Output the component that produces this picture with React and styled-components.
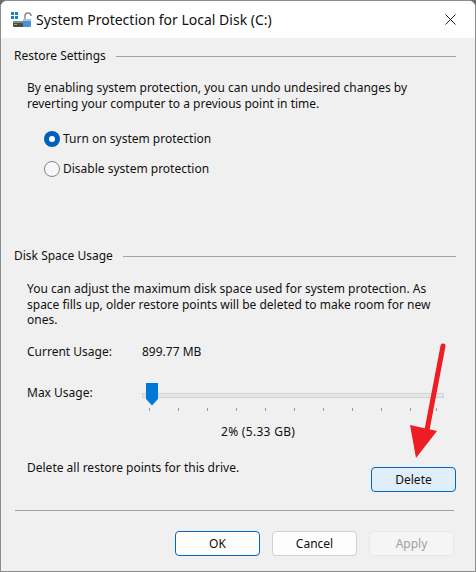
import React from "react";
import styled, { createGlobalStyle } from "styled-components";

const GlobalStyle = createGlobalStyle`
  html, body { margin: 0; padding: 0; background: #6b6b6b; }
  body { font-family: "Noto Sans", "Segoe UI", sans-serif; color: #111111; }
  * { box-sizing: border-box; }
`;

const Window = styled.div`
  position: relative;
  width: 476px;
  height: 572px;
  border: 1px solid #8c8c8c;
  border-radius: 7px 7px 0 0;
  background: #f0f0f0;
  display: flex;
  flex-direction: column;
  overflow: hidden;
`;

const TitleBar = styled.div`
  height: 37px;
  flex: none;
  background: #ffffff;
  display: flex;
  align-items: center;
  padding-left: 9px;
`;

const Title = styled.div`
  font-size: 14px;
  margin-left: 4px;
  color: #111111;
  flex: 1;
`;

const CloseButton = styled.div`
  width: 46px;
  height: 37px;
  display: flex;
  align-items: center;
  justify-content: center;
  margin-right: 2px;
`;

const Body = styled.div`
  flex: 1;
  display: flex;
  flex-direction: column;
  padding: 10px 19px 0 13px;
  font-size: 12px;
  line-height: 16px;
`;

const Group = styled.section`
  display: flex;
  flex-direction: column;
  margin-top: ${(p) => p.$top || 0}px;
`;

const GroupHeader = styled.div`
  display: flex;
  align-items: center;
  gap: 10px;
  height: 16px;
`;

const Rule = styled.div`
  flex: 1;
  height: 1px;
  background: #a3a3a3;
`;

const Indent = styled.div`
  padding-left: 13px;
  display: flex;
  flex-direction: column;
`;

const Paragraph = styled.p`
  margin: ${(p) => p.$top}px 0 0;
  line-height: 15.5px;
`;

const RadioList = styled.div`
  display: flex;
  flex-direction: column;
  gap: 10px;
  margin-top: 18px;
  padding-left: 17px;
`;

const RadioRow = styled.label`
  display: flex;
  align-items: center;
  gap: 3px;
  height: 20px;
`;

const RadioCircle = styled.span`
  width: 16px;
  height: 16px;
  border-radius: 50%;
  flex: none;
  display: flex;
  align-items: center;
  justify-content: center;
  background: ${(p) => (p.$checked ? "#005fb8" : "#f7f7f7")};
  border: ${(p) => (p.$checked ? "none" : "1px solid #858585")};
  &::after {
    content: "";
    display: ${(p) => (p.$checked ? "block" : "none")};
    width: 6px;
    height: 6px;
    border-radius: 50%;
    background: #ffffff;
  }
`;

const InfoRow = styled.div`
  display: flex;
  align-items: flex-start;
  margin-top: ${(p) => p.$top}px;
`;

const InfoLabel = styled.div`
  width: 115px;
  flex: none;
  margin-top: ${(p) => p.$offset || 0}px;
`;

const Slider = styled.div`
  width: 302px;
  display: flex;
  flex-direction: column;
`;

const TrackArea = styled.div`
  position: relative;
  height: 24px;
  display: flex;
  align-items: center;
`;

const Track = styled.div`
  width: 100%;
  height: 5px;
  background: #e6e6e6;
  border: 1px solid #d4d4d4;
  margin-top: 1px;
`;

const Thumb = styled.div`
  position: absolute;
  left: ${(p) => p.$pos}px;
  top: 0;
  width: 12px;
  height: 23px;
  background: #0078d7;
  clip-path: polygon(0 0, 100% 0, 100% 72%, 50% 100%, 0 72%);
`;

const Ticks = styled.div`
  display: flex;
  padding-left: 7px;
  margin-top: 1px;
  height: 4px;
`;

const Tick = styled.span`
  width: 1px;
  height: 3px;
  background: #9a9a9a;
  flex: none;
  margin-left: ${(p) => p.$gap}px;
`;

const Percent = styled.div`
  margin-top: 12px;
  padding-left: 194px;
  letter-spacing: 0.3px;
`;

const DeleteRow = styled.div`
  display: flex;
  justify-content: space-between;
  align-items: flex-start;
  margin-top: 20px;
`;

const Button = styled.button`
  width: 85px;
  height: 25px;
  font-family: inherit;
  font-size: 12px;
  border-radius: 4px;
  padding: 0;
  margin-top: ${(p) => p.$top || 0}px;
  color: ${(p) => (p.$disabled ? "#a0a0a0" : "#111111")};
  background: ${(p) =>
    p.$variant === "accent" ? "#e0eef9" : p.$disabled ? "#f5f5f5" : "#fdfdfd"};
  border: 1px solid
    ${(p) =>
      p.$variant === "accent" || p.$variant === "default"
        ? "#0067c0"
        : p.$disabled
        ? "#e8e8e8"
        : "#d0d0d0"};
`;

const Separator = styled.hr`
  margin: 18px 2px 0 1px;
  border: none;
  height: 1px;
  background: #a0a0a0;
`;

const Footer = styled.div`
  display: flex;
  justify-content: flex-end;
  gap: 12px;
  margin: 20px 2px 0 0;
`;

const Annotation = styled.svg`
  position: absolute;
  left: -1px;
  top: -1px;
  pointer-events: none;
`;

function AppIcon() {
  return (
    <svg width="22" height="18" viewBox="0 0 22 18">
      <rect x="1" y="1" width="3" height="3" fill="#1e7ad8" />
      <rect x="5" y="1" width="3" height="3" fill="#1e7ad8" />
      <rect x="1" y="5" width="3" height="3" fill="#1e7ad8" />
      <rect x="5" y="5" width="3" height="3" fill="#1e7ad8" />
      <rect x="3" y="10" width="11" height="6" rx="1" fill="#4a4a4a" />
      <rect x="3" y="10" width="11" height="2" fill="#8a8a8a" />
      <rect x="4" y="13" width="3" height="1" fill="#4fd14f" />
      <path d="M15 8 V5 a3 3 0 0 1 6 0" stroke="#8a8a8a" strokeWidth="1.5" fill="none" />
      <rect x="13" y="8" width="8" height="8" rx="1" fill="#4a90d9" />
      <rect x="13" y="8" width="8" height="2" fill="#9cc6ef" />
    </svg>
  );
}

function Radio({ checked, children }) {
  return (
    <RadioRow>
      <RadioCircle $checked={checked} />
      <span>{children}</span>
    </RadioRow>
  );
}

const tickGaps = [0, 29, 29, 29, 29, 29, 29, 29, 29, 29, 26];

export default function App() {
  return (
    <>
      <GlobalStyle />
      <Window>
        <TitleBar>
          <AppIcon />
          <Title>System Protection for Local Disk (C:)</Title>
          <CloseButton>
            <svg width="11" height="11" viewBox="0 0 11 11">
              <path d="M0.5 0.5 L10.5 10.5 M10.5 0.5 L0.5 10.5" stroke="#1a1a1a" strokeWidth="1" />
            </svg>
          </CloseButton>
        </TitleBar>
        <Body>
          <Group>
            <GroupHeader>
              <span>Restore Settings</span>
              <Rule />
            </GroupHeader>
            <Indent>
              <Paragraph $top={16}>
                By enabling system protection, you can undo undesired changes by
                reverting your computer to a previous point in time.
              </Paragraph>
              <RadioList>
                <Radio checked>Turn on system protection</Radio>
                <Radio>Disable system protection</Radio>
              </RadioList>
            </Indent>
          </Group>
          <Group $top={69}>
            <GroupHeader>
              <span>Disk Space Usage</span>
              <Rule />
            </GroupHeader>
            <Indent>
              <Paragraph $top={17}>
                You can adjust the maximum disk space used for system protection. As
                space fills up, older restore points will be deleted to make room for new
                ones.
              </Paragraph>
              <InfoRow $top={16}>
                <InfoLabel>Current Usage:</InfoLabel>
                <div>899.77 MB</div>
              </InfoRow>
              <InfoRow $top={23}>
                <InfoLabel $offset={2}>Max Usage:</InfoLabel>
                <Slider>
                  <TrackArea>
                    <Track />
                    <Thumb $pos={4} />
                  </TrackArea>
                  <Ticks>
                    {tickGaps.map((g, i) => (
                      <Tick key={i} $gap={i === 0 ? 0 : g - 1} />
                    ))}
                  </Ticks>
                </Slider>
              </InfoRow>
              <Percent>2% (5.33 GB)</Percent>
              <DeleteRow>
                <span>Delete all restore points for this drive.</span>
                <Button $variant="accent" $top={7}>Delete</Button>
              </DeleteRow>
            </Indent>
          </Group>
          <Separator />
          <Footer>
            <Button $variant="default">OK</Button>
            <Button>Cancel</Button>
            <Button $disabled>Apply</Button>
          </Footer>
        </Body>
        <Annotation width="476" height="572" viewBox="0 0 476 572">
          <line x1="443" y1="346" x2="427" y2="430" stroke="#ee1c24" strokeWidth="5" strokeLinecap="round" />
          <polygon points="410,425 437,431 416,458" fill="#ee1c24" />
        </Annotation>
      </Window>
    </>
  );
}
